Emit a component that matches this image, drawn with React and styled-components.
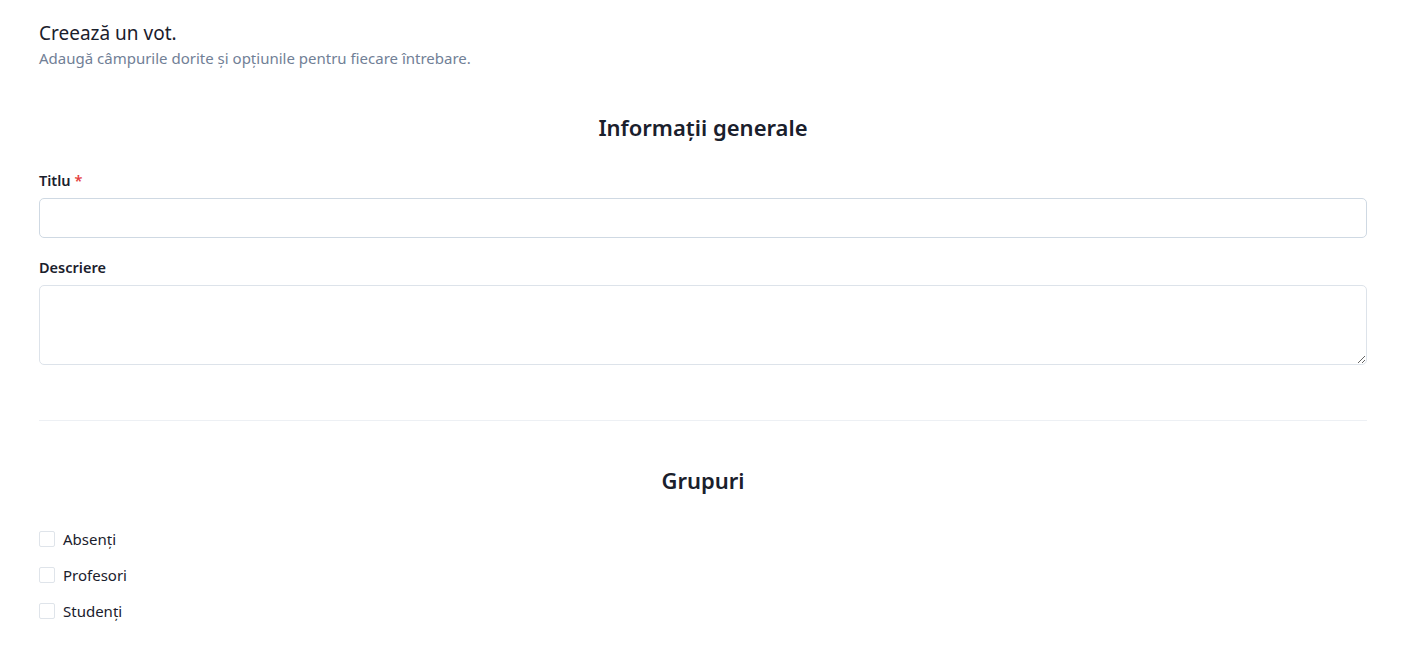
import React from "react";
import styled, { createGlobalStyle } from "styled-components";

const GlobalStyle = createGlobalStyle`
  html, body {
    margin: 0;
    padding: 0;
    background: #ffffff;
    font-family: "Noto Sans", "Open Sans", sans-serif;
    color: #1a202c;
  }
  * {
    box-sizing: border-box;
  }
`;

const Page = styled.div`
  padding: 20px 40px 24px 39px;
`;

const Intro = styled.div`
  display: flex;
  flex-direction: column;
  gap: 2px;
`;

const Title = styled.h1`
  margin: 0;
  font-size: 19px;
  font-weight: 400;
  line-height: 26px;
  color: #1a202c;
`;

const Subtitle = styled.p`
  margin: 0;
  font-size: 15px;
  line-height: 20px;
  color: #718096;
`;

const Section = styled.section`
  display: flex;
  flex-direction: column;
  padding-top: ${({ top }) => top || 0}px;
`;

const SectionTitle = styled.h2`
  margin: 0 0 ${({ after }) => after || 20}px;
  text-align: center;
  font-size: 22px;
  font-weight: 600;
  line-height: 32px;
  color: #1a202c;
`;

const Field = styled.div`
  display: flex;
  flex-direction: column;
  gap: 8px;
  margin-bottom: 19px;
`;

const Label = styled.label`
  font-size: 14.5px;
  font-weight: 600;
  line-height: 20px;
  color: #1a202c;
`;

const Required = styled.span`
  color: #e53e3e;
  margin-left: 4px;
`;

const Input = styled.input`
  width: 100%;
  height: 40px;
  border: 1px solid #cfd9e3;
  border-radius: 5px;
  padding: 0 12px;
  font: inherit;
  outline: none;
`;

const TextArea = styled.textarea`
  width: 100%;
  height: 80px;
  border: 1px solid #dde3ea;
  border-radius: 5px;
  padding: 8px 12px;
  font: inherit;
  outline: none;
  resize: vertical;
  display: block;
`;

const Divider = styled.hr`
  border: 0;
  border-top: 1px solid #edf0f4;
  margin: 36px 0 0;
`;

const CheckList = styled.div`
  display: flex;
  flex-direction: column;
  gap: 12px;
`;

const CheckRow = styled.label`
  display: flex;
  align-items: center;
  gap: 8px;
  font-size: 15px;
  line-height: 24px;
  color: #1a202c;
`;

const Box = styled.span`
  width: 16px;
  height: 16px;
  border: 1.5px solid #dfe4ea;
  border-radius: 2px;
  background: #fff;
  flex-shrink: 0;
`;

const groups = ["Absenți", "Profesori", "Studenți"];

export default function App() {
  return (
    <>
      <GlobalStyle />
      <Page>
        <Intro>
          <Title>Creează un vot.</Title>
          <Subtitle>Adaugă câmpurile dorite și opțiunile pentru fiecare întrebare.</Subtitle>
        </Intro>

        <Section top={43}>
          <SectionTitle after={27}>Informații generale</SectionTitle>
          <Field>
            <Label>
              Titlu<Required>*</Required>
            </Label>
            <Input type="text" />
          </Field>
          <Field>
            <Label>Descriere</Label>
            <TextArea />
          </Field>
          <Divider />
        </Section>

        <Section top={43}>
          <SectionTitle after={31}>Grupuri</SectionTitle>
          <CheckList>
            {groups.map((g) => (
              <CheckRow key={g}>
                <Box />
                {g}
              </CheckRow>
            ))}
          </CheckList>
        </Section>
      </Page>
    </>
  );
}
